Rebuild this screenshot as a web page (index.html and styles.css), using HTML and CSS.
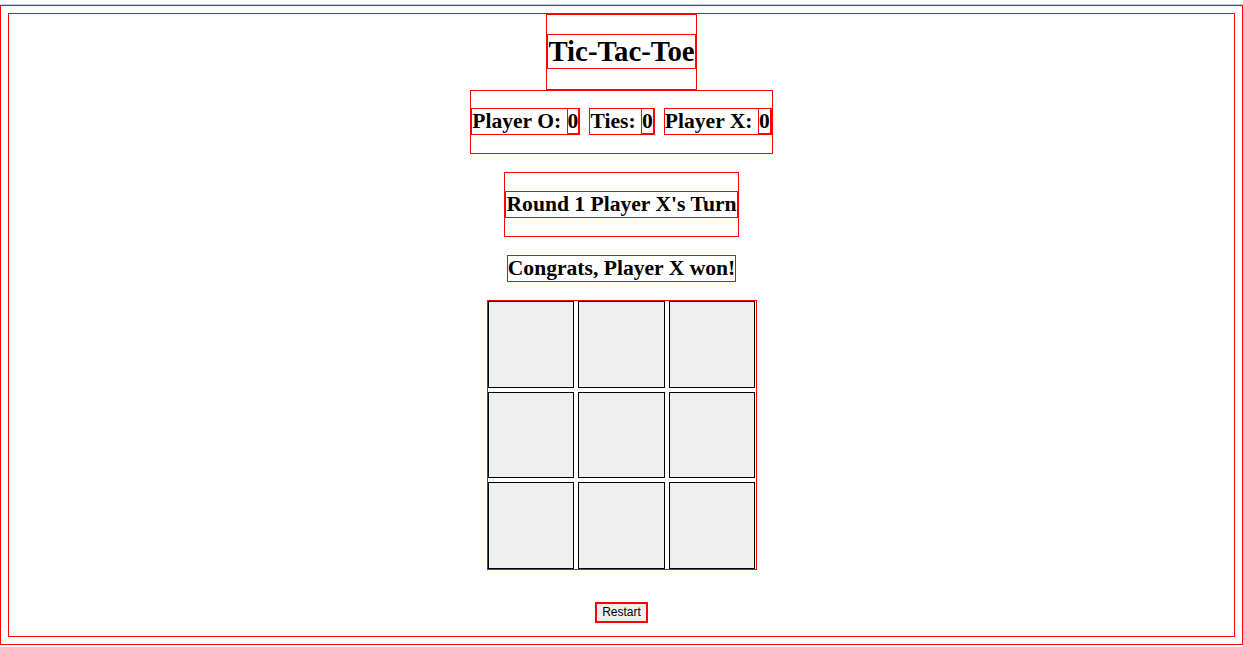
FILE: index.html
```html
<!DOCTYPE html>
<html lang="en">
<head>
<meta charset="utf-8">
<title>Tic-Tac-Toe</title>
<link rel="stylesheet" href="styles.css">
</head>
<body>
<div class="topline"></div>
<div class="page">
  <div class="app">
    <div class="header">
      <h1 class="title">Tic-Tac-Toe</h1>
    </div>
    <div class="scores">
      <h2 class="score">Player O: <span class="num">0</span></h2>
      <h2 class="score">Ties: <span class="num">0</span></h2>
      <h2 class="score">Player X: <span class="num">0</span></h2>
    </div>
    <div class="round">
      <h2 class="status">Round 1 Player X's Turn</h2>
    </div>
    <h2 class="winner">Congrats, Player X won!</h2>
    <div class="board">
      <button class="cell"></button>
      <button class="cell"></button>
      <button class="cell"></button>
      <button class="cell"></button>
      <button class="cell"></button>
      <button class="cell"></button>
      <button class="cell"></button>
      <button class="cell"></button>
      <button class="cell"></button>
    </div>
    <button class="restart">Restart</button>
  </div>
</div>
</body>
</html>
```
FILE: styles.css
```css
html, body {
  margin: 0;
  padding: 0;
  background: #fff;
}
body {
  padding-top: 4px;
  font-family: "Liberation Serif", "Times New Roman", serif;
  color: #000;
}
.topline {
  height: 1px;
  background: #cccccc;
}
.page {
  box-sizing: border-box;
  height: 640px;
  border: 1px solid red;
  padding: 7px;
}
.app {
  box-sizing: border-box;
  height: 100%;
  border: 1px solid red;
  display: flex;
  flex-direction: column;
  align-items: center;
}
.header {
  border: 1px solid red;
}
.title {
  margin: 19.3px 0;
  border: 1px solid red;
  font-size: 28.8px;
  font-weight: bold;
  line-height: 33px;
}
.scores {
  border: 1px solid red;
  display: flex;
  gap: 9px;
}
.score, .status, .winner {
  font-size: 21.6px;
  font-weight: bold;
  line-height: 25px;
  border: 1px solid red;
  margin: 17.9px 0;
  white-space: pre;
}
.num {
  border: 1px solid red;
}
.round {
  border: 1px solid red;
  margin-top: 18px;
}
.winner {
  margin-top: 18px;
}
.board {
  box-sizing: border-box;
  width: 270px;
  height: 270px;
  border: 1px solid red;
  display: grid;
  grid-template-columns: repeat(3, 1fr);
  grid-template-rows: repeat(3, 1fr);
  gap: 4px;
}
.cell {
  border: 1px solid #000;
  background: #efefef;
  padding: 0;
  margin: 0;
}
.restart {
  margin-top: 32px;
  border: 2px solid red;
  background: #efefef;
  font-family: "Liberation Sans", Arial, sans-serif;
  font-size: 12px;
  line-height: 15px;
  padding: 1px 5px;
  color: #000;
}
```
